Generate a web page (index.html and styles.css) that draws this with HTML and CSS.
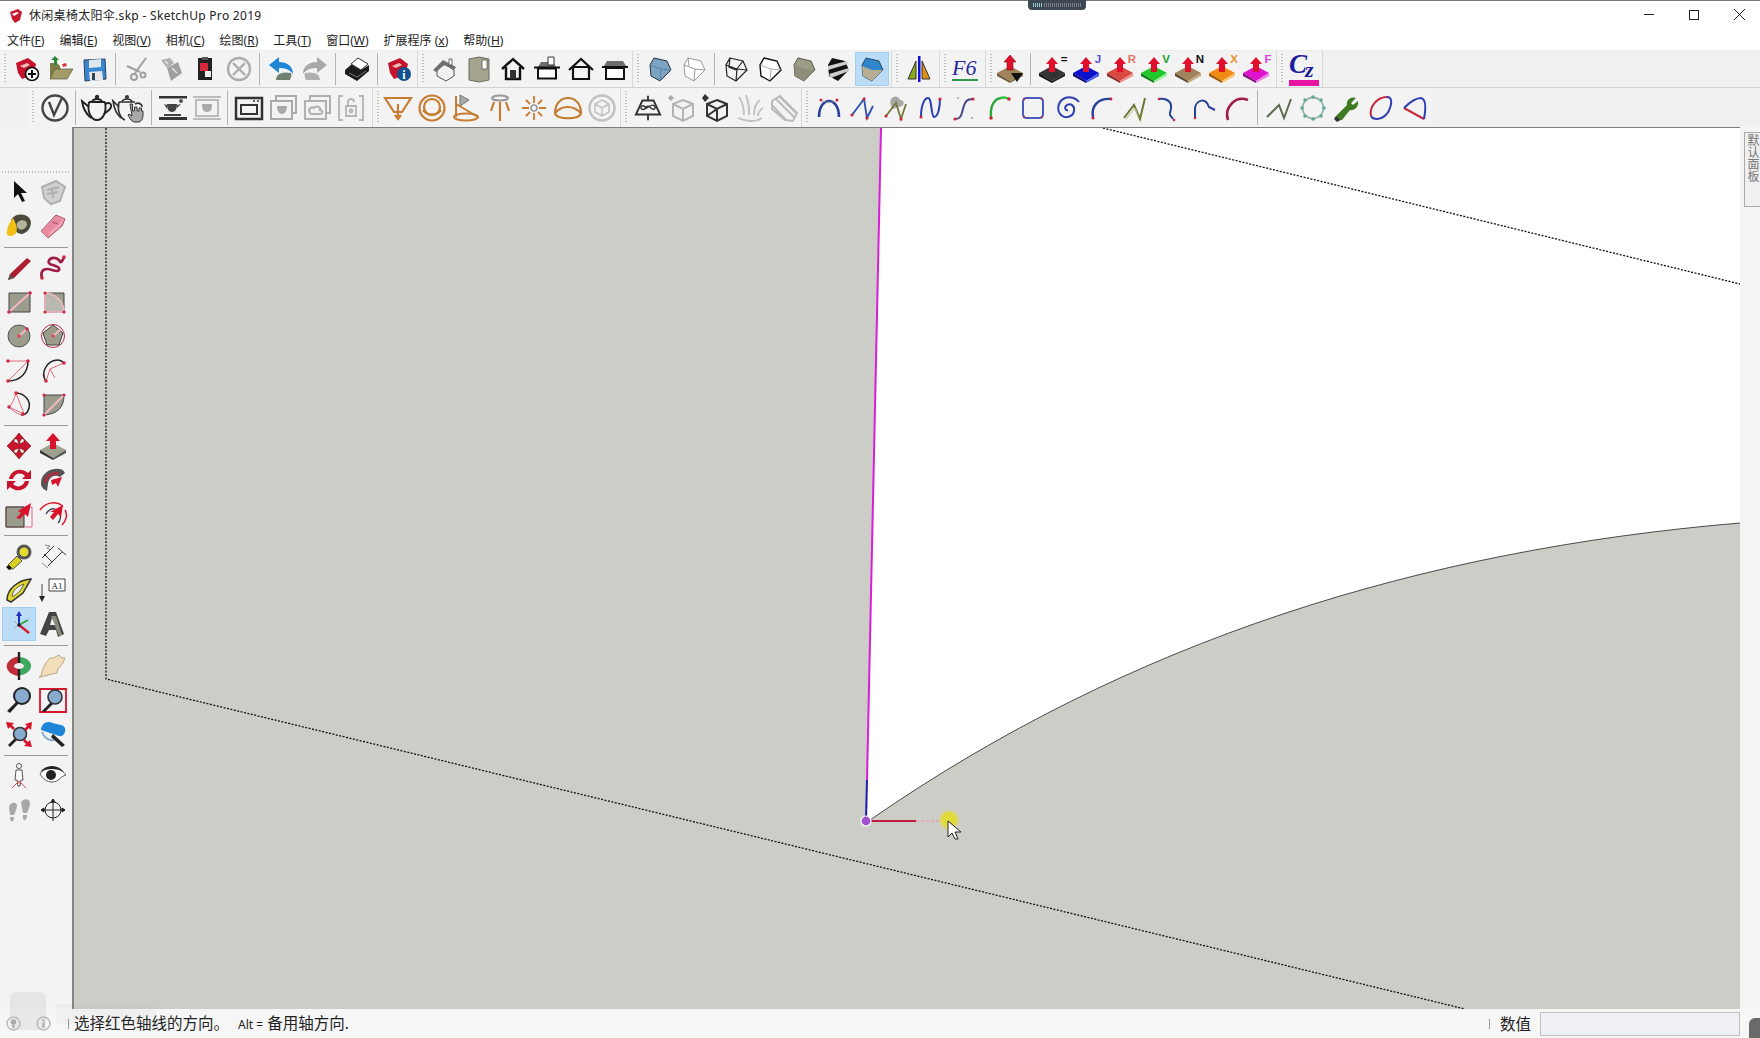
FILE: index.html
```html
<!DOCTYPE html>
<html lang="zh-CN">
<head>
<meta charset="utf-8">
<title>SketchUp</title>
<link rel="stylesheet" href="styles.css">
</head>
<body>
<div class="app">
<div class="widget"><span class="widget-on"></span><span class="widget-off"></span></div>
<header class="titlebar">
  <svg class="appicon" viewBox="0 0 14 14"><path d="M1 3l8-3 4 3-2 8-5 3-3-4z" fill="#c8162e"/><path d="M3 5l5-2 2 1-5 3z" fill="#fff"/></svg>
  <span class="title">休闲桌椅太阳伞.skp - SketchUp Pro 2019</span>
  <div class="winctl">
    <span class="win-min"></span><span class="win-max"></span>
    <svg class="win-close" viewBox="0 0 11 11"><path d="M0 0l11 11M11 0L0 11" stroke="#222" fill="none"/></svg>
  </div>
</header>
<nav class="menu">
  <span>文件(<u>F</u>)</span><span>编辑(<u>E</u>)</span><span>视图(<u>V</u>)</span><span>相机(<u>C</u>)</span><span>绘图(<u>R</u>)</span><span>工具(<u>T</u>)</span><span>窗口(<u>W</u>)</span><span>扩展程序 (<u>x</u>)</span><span>帮助(<u>H</u>)</span>
</nav>

<div class="row row1">
  <div class="tb pr1">
    <i class="grip"></i>
    <div class="b"><svg viewBox="0 0 28 28"><path d="M3 8l12-5 8 6-3 11-11 4-4-6z" fill="#c4142d"/><path d="M7 11l7-3 3 2-6 3z" fill="#eebbbb"/><circle cx="19" cy="19" r="6.500" fill="#fff" stroke="#111" stroke-width="1.600"/><path d="M19 15v8M15 19h8" stroke="#111" stroke-width="2"/></svg></div>
    <div class="b"><svg viewBox="0 0 28 28"><path d="M3 8h7l2 2h8v5L6 24H3z" fill="#7d7d48"/><path d="M12 8l9-2 2 7-9 2z" fill="#fff"/><path d="M15 9l4-1 1 3-4 1z" fill="#d33"/><path d="M8 14h18l-6 10H3z" fill="#a39c68" stroke="#5a5a3a" stroke-width=".7"/><path d="M8 1l4 4h-2v5H7V5H4z" fill="#2c8a3a"/></svg></div>
    <div class="b"><svg viewBox="0 0 28 28"><path d="M3 5l21-1 1 20-21 2z" fill="#3a86d0" stroke="#23405f"/><path d="M8 5l12-1v8L8 13z" fill="#dfe6ee"/><path d="M8 17l13-1 1 9-13 1z" fill="#e8e8e8"/><path d="M11 18h3v7h-3z" fill="#345"/></svg></div>
    <i class="sep"></i>
    <div class="b"><svg viewBox="0 0 28 28" fill="none" stroke="#a0a0a0" stroke-width="2"><path d="M23 3L12 18M4 11l13 6"/><circle cx="11" cy="22" r="3"/><circle cx="20" cy="20" r="2.500"/></svg></div>
    <div class="b"><svg viewBox="0 0 28 28"><path d="M4 5l9-2 4 5-7 5z" fill="#b0b0b0"/><path d="M10 13l11-6 4 11-11 8z" fill="#a0a0a0"/><path d="M8 6l3 3M15 13l5 5" stroke="#e4e4e4" stroke-width="1.500"/></svg></div>
    <div class="b"><svg viewBox="0 0 28 28"><path d="M7 3h14v22H7z" fill="#222"/><path d="M11 2h6v3h-6z" fill="#555"/><path d="M9 8h8v8H9z" fill="#d8283c"/><path d="M14 16h6v6h-6z" fill="#eee"/></svg></div>
    <div class="b"><svg viewBox="0 0 28 28" fill="none" stroke="#adadad" stroke-width="2.400"><circle cx="14" cy="14" r="11"/><path d="M8 8l12 12M20 8L8 20"/></svg></div>
    <i class="sep"></i>
    <div class="b"><svg viewBox="0 0 28 28"><path d="M9 25c0-6 6-9 15-7 1 2 0 5-1 7z" fill="#6f8070"/><path d="M2 10l10-8v5c8 0 14 4 14 12-3-4-7-6-14-6v5z" fill="#1f86d6"/></svg></div>
    <div class="b"><svg viewBox="0 0 28 28"><path d="M19 25c0-6-6-9-15-7-1 2 0 5 1 7z" fill="#b0b0b0"/><path d="M26 10L16 2v5C8 7 2 11 2 19c3-4 7-6 14-6v5z" fill="#a8a8a8"/></svg></div>
    <i class="sep"></i>
    <div class="b"><svg viewBox="0 0 28 28"><path d="M2 15l7-6 9 6 8-5v6L14 26 2 19z" fill="#1c1c1c"/><path d="M8 9l7-6 10 6-7 6z" fill="#fff" stroke="#333"/><path d="M6 18l8 4 9-6" stroke="#777" fill="none"/></svg></div>
    <i class="sep"></i>
    <div class="b"><svg viewBox="0 0 28 28"><path d="M3 8l12-5 8 6-3 11-11 4-4-6z" fill="#c4142d"/><path d="M7 11l7-3 3 2-6 3z" fill="#eebbbb"/><circle cx="19" cy="19" r="7" fill="#12508e"/><text class="t-i" x="19" y="24">i</text></svg></div>
  </div>
  <div class="tb pr0">
    <i class="grip"></i>
    <div class="b"><svg viewBox="0 0 28 28"><path d="M6 15l8-6 9 6v6l-8 5-9-5z" fill="#f0f0f0" stroke="#555"/><path d="M2 15L12 5l13 7-2 3-10-5-8 7z" fill="#6f6f6f"/><path d="M18 4h3v6h-3z" fill="#fff" stroke="#444" stroke-width=".8"/></svg></div>
    <div class="b"><svg viewBox="0 0 28 28"><path d="M4 4l10-2 10 2v21l-10 2-10-2z" fill="#a3a38e" stroke="#6c6c60"/><path d="M17 5h5v9h-5z" fill="#fff" stroke="#555" stroke-width=".8"/></svg></div>
    <div class="b"><svg viewBox="0 0 28 28" fill="none" stroke="#111" stroke-width="2.400"><path d="M3 14L14 4l11 10M7 12v12h14V12"/><path d="M11 15h6v9h-6z" fill="#333" stroke="none"/></svg></div>
    <div class="b"><svg viewBox="0 0 28 28"><path d="M5 12l3-5h12l3 5z" fill="#6f6f6f"/><path d="M15 2h6v8h-6z" fill="#fff" stroke="#333"/><path d="M1 12.500h26" stroke="#111" stroke-width="2"/><path d="M5 13.500h18v10H5z" fill="#fff" stroke="#111" stroke-width="2"/></svg></div>
    <div class="b"><svg viewBox="0 0 28 28" fill="none" stroke="#111" stroke-width="2.200"><path d="M2 15L14 4l12 11M6 12v12h16V12z"/></svg></div>
    <div class="b"><svg viewBox="0 0 28 28"><path d="M3 11l3-5h16l3 5z" fill="#6f6f6f"/><path d="M1 12h26" stroke="#111" stroke-width="2"/><path d="M5 13h18v11H5z" fill="#fff" stroke="#111" stroke-width="2"/></svg></div>
  </div>
  <div class="tb pr2">
    <i class="grip"></i>
    <div class="b"><svg viewBox="0 0 28 28"><path d="M8 3l13 3 4 9-11 11-9-5-1-11z" fill="#7aa4c2" stroke="#26303a"/><path d="M4 10l11 4 10 1M15 14l-1 12" stroke="#5d86a4" fill="none"/></svg></div>
    <div class="b"><svg viewBox="0 0 28 28" fill="#fff" stroke="#9a9a9a"><path d="M8 3l13 3 4 9-11 11-9-5-1-11z"/><path d="M4 10l11 4 10 1M15 14l-1 12M8 3l1 8" fill="none"/></svg></div>
    <i class="sep"></i>
    <div class="b"><svg viewBox="0 0 28 28" fill="none" stroke="#222" stroke-width="1.200"><path d="M8 3l13 3 4 9-11 11-9-5-1-11z"/><path d="M4 10l11 4 10 1M15 14l-1 12M8 3l-1 9 7 3M21 6l-7 9"/></svg></div>
    <div class="b"><svg viewBox="0 0 28 28" fill="#fff" stroke="#111" stroke-width="1.400"><path d="M8 3l13 3 4 9-11 11-9-5-1-11z"/><path d="M4 10l11 4 11 1M15 14l-1 12" stroke="#777" stroke-width=".6"/></svg></div>
    <div class="b"><svg viewBox="0 0 28 28"><path d="M8 3l13 3 4 9-11 11-9-5-1-11z" fill="#9c9c88" stroke="#55554c"/><path d="M4 10l11 4 10 1-11 11-9-5z" fill="#8e8e7b"/></svg></div>
    <div class="b"><svg viewBox="0 0 28 28"><path d="M8 3l13 3 4 9-11 11-9-5-1-11z" fill="#111"/><path d="M4 11l19-5 1 3-20 6zM5 19l20-6 0 3-18 7z" fill="#ccc"/></svg></div>
    <div class="b on"><svg viewBox="0 0 28 28"><path d="M8 3l13 3 4 9-11 11-9-5-1-11z" fill="#2f86c8" stroke="#2a4a6a"/><path d="M4 11l10 4 11 0-11 11-9-5z" fill="#b8ae94"/></svg></div>
  </div>
  <div class="tb">
    <i class="grip"></i>
    <div class="b"><svg viewBox="0 0 28 28"><path d="M3 24l8-18v18z" fill="#8aa820" stroke="#333"/><path d="M17 6l8 18h-8z" fill="#dc8f1c" stroke="#333"/><path d="M13 1h2.500v26H13z" fill="#1010dc"/></svg></div>
  </div>
  <div class="tb">
    <i class="grip g9"></i>
    <div class="b"><svg viewBox="0 0 28 28"><text class="t-f6" x="1" y="20">F6</text><path d="M1 24h26v2H1z" fill="#2d9a4c"/></svg></div>
  </div>
  <div class="tb">
    <i class="grip g8"></i>
    <div class="b"><svg viewBox="0 0 28 28"><path d="M1 18l13-7 13 7-13 8z" fill="#a0835a"/><path d="M1 18l13 8v2L1 21z" fill="#6e5a3c"/><path d="M27 18l-13 8v2l13-7z" fill="#8a7048"/><path d="M14 0l6 7h-3v8h-6V7H8z" fill="#e0102c" stroke="#600" stroke-width=".5"/><path d="M15 18h12l-6 9z" fill="#111"/></svg></div>
    <i class="sep"></i>
    <div class="b"><svg viewBox="0 0 28 28"><path d="M1 18l13-7 13 7-13 8z" fill="#333"/><path d="M1 18l13 8v2L1 21z" fill="#111"/><path d="M27 18l-13 8v2l13-7z" fill="#222"/><path d="M14 2l6 7h-3v8h-6V9H8z" fill="#e0102c"/><text class="t-l t-k" x="26" y="8">=</text></svg></div>
    <div class="b"><svg viewBox="0 0 28 28"><path d="M1 18l13-7 13 7-13 8z" fill="#0a10d0"/><path d="M1 18l13 8v2L1 21z" fill="#0a0a70"/><path d="M27 18l-13 8v2l13-7z" fill="#4a5ae0"/><path d="M14 2l6 7h-3v8h-6V9H8z" fill="#e0102c"/><text class="t-l t-j" x="26" y="8">J</text></svg></div>
    <div class="b"><svg viewBox="0 0 28 28"><path d="M1 18l13-7 13 7-13 8z" fill="#d84a40"/><path d="M1 18l13 8v2L1 21z" fill="#8a2a24"/><path d="M27 18l-13 8v2l13-7z" fill="#e89088"/><path d="M14 2l6 7h-3v8h-6V9H8z" fill="#e0102c"/><text class="t-l t-r" x="26" y="8">R</text></svg></div>
    <div class="b"><svg viewBox="0 0 28 28"><path d="M1 18l13-7 13 7-13 8z" fill="#20c82c"/><path d="M1 18l13 8v2L1 21z" fill="#107a18"/><path d="M27 18l-13 8v2l13-7z" fill="#a0f0a0"/><path d="M14 2l6 7h-3v8h-6V9H8z" fill="#e0102c"/><text class="t-l t-v" x="26" y="8">V</text></svg></div>
    <div class="b"><svg viewBox="0 0 28 28"><path d="M1 18l13-7 13 7-13 8z" fill="#a0835a"/><path d="M1 18l13 8v2L1 21z" fill="#5e4a30"/><path d="M27 18l-13 8v2l13-7z" fill="#c0a880"/><path d="M14 2l6 7h-3v8h-6V9H8z" fill="#e0102c"/><text class="t-l t-k" x="26" y="8">N</text></svg></div>
    <div class="b"><svg viewBox="0 0 28 28"><path d="M1 18l13-7 13 7-13 8z" fill="#f08c14"/><path d="M1 18l13 8v2L1 21z" fill="#985808"/><path d="M27 18l-13 8v2l13-7z" fill="#f8c070"/><path d="M14 2l6 7h-3v8h-6V9H8z" fill="#e0102c"/><text class="t-l t-x" x="26" y="8">X</text></svg></div>
    <div class="b"><svg viewBox="0 0 28 28"><path d="M1 18l13-7 13 7-13 8z" fill="#e014d0"/><path d="M1 18l13 8v2L1 21z" fill="#80107a"/><path d="M27 18l-13 8v2l13-7z" fill="#f080e8"/><path d="M14 2l6 7h-3v8h-6V9H8z" fill="#e0102c"/><text class="t-l t-f" x="26" y="8">F</text></svg></div>
  </div>
  <div class="tb tb-end">
    <i class="grip g11"></i>
    <div class="b"><svg viewBox="0 0 28 28"><text class="t-cz" x="-1" y="18">C</text><text class="t-cz2" x="15" y="22">z</text><path d="M-1 25h30v6H-1z" fill="#e814a4"/></svg></div>
  </div>
</div>

<div class="row row2">
  <div class="tb pr4">
    <i class="grip"></i>
    <div class="b"><svg viewBox="0 0 28 28" fill="none" stroke="#444" stroke-width="2.400"><circle cx="14" cy="14" r="12.500"/><path d="M8 8l5 13 8-17"/></svg></div>
    <i class="sep"></i>
    <div class="b"><svg class="wide" viewBox="0 0 32 28" fill="none" stroke="#222" stroke-width="1.900"><circle cx="16" cy="3" r="1.200"/><path d="M11 8c1-4 9-4 10 0M8 8h16"/><path d="M8 8c-2 10 2 18 8 18s10-8 8-18"/><path d="M8 13L1 7c1 7 4 13 9 17"/><path d="M24 10c6-3 8 2 4 6l-5 4"/></svg></div>
    <div class="b"><svg class="wide" viewBox="0 0 32 28"><g fill="none" stroke="#333" stroke-width="1.700"><circle cx="12" cy="3" r="1.200"/><path d="M7 8c1-4 9-4 10 0M4 8h16"/><path d="M4 8c-2 9 1 16 6 18"/><path d="M4 13L-2 7c1 7 3 13 8 17"/><path d="M20 10c4-2 7 0 7 3"/></g><path d="M15 10h2.500v7h2v-4h2.500v4h2v-3h2.500v3h1.500v4c0 4-2 7-5 7h-3c-3 0-5-3-7-7l1-1 3 2z" fill="#aaa" stroke="#333"/></svg></div>
    <i class="sep"></i>
    <div class="b"><svg viewBox="0 0 28 28"><path d="M0 2h28v2.500H0zM0 23h28v3H0z" fill="#333"/><circle cx="22" cy="7" r="2" fill="#555"/><path d="M8 10h10c0 4-1 8-5 8s-5-4-5-8zM5 20h17v2H5z" fill="#444"/><path d="M18 11l4-1-4 4zM8 11l-3-1 3 5z" fill="#444"/></svg></div>
    <div class="b"><svg viewBox="0 0 28 28"><path d="M0 2h28v2H0zM0 24h28v2H0z" fill="#bbb"/><path d="M3 6h22v16H3z" fill="none" stroke="#bbb" stroke-width="2"/><path d="M9 10h10c0 5-1 8-5 8s-5-3-5-8z" fill="#aaa"/></svg></div>
    <i class="sep"></i>
    <div class="b"><svg viewBox="0 0 28 28" fill="none" stroke="#333" stroke-width="2.500"><path d="M1 4h26v21H1z"/><path d="M6 11h16v9H6z" stroke-width="2"/><path d="M18 7h2M22 7h2" stroke-width="1.500"/></svg></div>
    <div class="b"><svg viewBox="0 0 28 28" fill="none" stroke="#aaa" stroke-width="2"><path d="M7 6V2h20v17h-4"/><path d="M2 7h21v18H2z"/><path d="M8 12h10c0 5-2 8-5 8s-5-3-5-8z" fill="#aaa" stroke="none"/></svg></div>
    <div class="b"><svg viewBox="0 0 28 28" fill="none" stroke="#b0b0b0" stroke-width="2"><path d="M7 6V2h20v17h-4"/><path d="M2 7h21v18H2z"/><path d="M7 19c-3-4 2-7 4-5 2-3 7-1 6 2 3 0 3 4 0 4H8z"/></svg></div>
    <div class="b"><svg viewBox="0 0 28 28" fill="none" stroke="#b4b4b4" stroke-width="1.800"><path d="M6 2H2v24h4M22 2h4v24h-4"/><path d="M9 12h10v10H9zM11 12V8c0-4 6-4 6 0"/><circle cx="14" cy="17" r="1.500"/></svg></div>
  </div>
  <div class="tb pr1">
    <i class="grip g9"></i>
    <div class="b"><svg viewBox="0 0 28 28" fill="none" stroke="#c77c32" stroke-width="2.200"><path d="M1 4h26l-9 14H10zM14 10v14"/><path d="M11 21l3 4 3-4" fill="#c77c32"/></svg></div>
    <div class="b"><svg viewBox="0 0 28 28" fill="none" stroke="#c77c32" stroke-width="2.200"><circle cx="14" cy="14" r="12.500"/><circle cx="14" cy="13" r="8"/><path d="M5 16c4 6 14 6 18 0"/></svg></div>
    <div class="b"><svg viewBox="0 0 28 28"><path d="M8 1v11l9-6z" fill="#aaa" stroke="#777"/><g fill="none" stroke="#c77c32" stroke-width="2"><path d="M4 2v21M4 10l22 13"/><ellipse cx="14" cy="23" rx="12" ry="3.500"/></g></svg></div>
    <div class="b"><svg viewBox="0 0 28 28"><ellipse cx="14" cy="4" rx="8" ry="2.500" fill="none" stroke="#999" stroke-width="2"/><path d="M14 8v19M8 8l-3 9M20 8l3 9" stroke="#c77c32" stroke-width="2.200" fill="none"/></svg></div>
    <div class="b"><svg viewBox="0 0 28 28"><circle cx="14" cy="14" r="3" fill="none" stroke="#999" stroke-width="1.600"/><path d="M14 2v7M14 19v7M2 14h7M19 14h7M6 6l4 4M18 18l4 4M22 6l-4 4M10 18l-4 4" stroke="#c77c32" stroke-width="1.800"/></svg></div>
    <div class="b"><svg viewBox="0 0 28 28" fill="none" stroke="#c77c32" stroke-width="2.200"><path d="M1 19C1 -1 27 -1 27 19c0 7-26 7-26 0z"/><path d="M1 19c7-8 18-8 26 0"/></svg></div>
    <div class="b"><svg viewBox="0 0 28 28" fill="none" stroke="#c0c0c0" stroke-width="2.400"><circle cx="14" cy="14" r="12.500"/><path d="M14 6l7 4v8l-7 4-7-4v-8zM7 10l7 4 7-4M14 14v8" stroke-width="1.500"/></svg></div>
  </div>
  <div class="tb pr0">
    <i class="grip"></i>
    <div class="b"><svg viewBox="0 0 30 28" fill="none" stroke="#333" stroke-width="2"><path d="M9 6h12l7 15H2zM15 1v5M15 21v6"/><path d="M12 13c-3-3-6 0-4 2s3 0 7-2 5-3 7-1-1 5-4 2-3-2-6-1z" stroke-width="1.500"/></svg></div>
    <div class="b"><svg viewBox="0 0 28 28"><path d="M3 1l3 3-3 3-3-3z" fill="#aaa"/><g fill="none" stroke="#b4b4b4" stroke-width="2"><path d="M15 6l10 4v12l-10 5-10-5V10zM5 10l10 5 10-5M15 15v12"/></g></svg></div>
    <div class="b"><svg viewBox="0 0 28 28"><path d="M3 0l4 4-4 4-3-4z" fill="#333"/><g fill="none" stroke="#333" stroke-width="2"><path d="M15 6l10 4v12l-10 5-10-5V10zM5 10l10 5 10-5M15 15v12M5 22l10-7"/></g></svg></div>
    <div class="b"><svg viewBox="0 0 28 28" fill="none" stroke="#c0c0c0" stroke-width="1.800"><path d="M2 24c8 4 18 4 24 0M8 21C8 12 5 6 3 3M13 21C14 10 11 5 10 1M18 21c0-8 2-12 6-15M22 22c0-4 2-6 5-8"/></svg></div>
    <div class="b"><svg viewBox="0 0 28 28" fill="none" stroke="#bbb" stroke-width="2"><path d="M2 7l8-5 17 17-4 8-8-1L2 15zM6 5l18 18M10 3l16 16M2 11l14 15"/></svg></div>
  </div>
  <div class="tb tb-tail">
    <i class="grip"></i>
    <div class="b"><svg viewBox="0 0 28 28"><path d="M4 23C4 11 10 7 14 7s10 4 10 16" fill="none" stroke="#27409a" stroke-width="2.600"/><path d="M6 6c3 3 13 3 16 0" fill="none" stroke="#aaa" stroke-dasharray="2 1"/><g fill="#c8283c"><circle cx="6" cy="6" r="1.500"/><circle cx="22" cy="6" r="1.500"/></g></svg></div>
    <div class="b"><svg viewBox="0 0 28 28"><path d="M3 21L15 5l3 19L24 12" fill="none" stroke="#2b4fb0" stroke-width="1.800"/><g fill="#c8283c"><circle cx="3" cy="21" r="1.600"/><circle cx="15" cy="5" r="1.600"/><circle cx="18" cy="24" r="1.600"/></g></svg></div>
    <div class="b"><svg viewBox="0 0 28 28"><path d="M8 5c3-4 8-3 9 1 4 0 5 4 2 6l-9 3c-3-3-3-7-2-10z" fill="#a8a8a8"/><path d="M3 22L13 9l5 16 5-15" fill="none" stroke="#76763c" stroke-width="1.800"/><g fill="#c8283c"><circle cx="3" cy="22" r="1.600"/><circle cx="18" cy="25" r="1.600"/></g></svg></div>
    <div class="b"><svg viewBox="0 0 28 28"><path d="M4 23C4 10 8 4 11 4c4 0 3 18 6 19 4 0 6-9 6-19" fill="none" stroke="#2b3fb4" stroke-width="2"/><g fill="#c8283c"><circle cx="4" cy="23" r="1.600"/><circle cx="23" cy="5" r="1.600"/></g></svg></div>
    <div class="b"><svg viewBox="0 0 28 28"><path d="M4 25c5 0 6-2 8-10s4-10 10-10" fill="none" stroke="#4a4a8a" stroke-width="2"/><path d="M6 4h2M20 24h2" stroke="#777"/><g fill="#c8283c"><circle cx="22" cy="5" r="1.600"/><circle cx="4" cy="25" r="1.600"/></g></svg></div>
    <div class="b"><svg viewBox="0 0 28 28"><path d="M6 23C5 12 9 5 16 4" fill="none" stroke="#28a838" stroke-width="2.400"/><path d="M16 4c3-1 6 0 8 1" fill="none" stroke="#28c838" stroke-width="2.400"/><g fill="#c8283c"><circle cx="6" cy="24" r="1.800"/><circle cx="24" cy="5" r="1.800"/></g></svg></div>
    <div class="b"><svg viewBox="0 0 28 28"><path d="M8 4h12c3 0 4 1 4 4v12c0 3-1 4-4 4H8c-3 0-4-1-4-4V8c0-3 1-4 4-4z" fill="none" stroke="#4858bc" stroke-width="2"/><g fill="#c8283c"><circle cx="5" cy="5" r="1"/><circle cx="23" cy="5" r="1"/><circle cx="5" cy="23" r="1"/><circle cx="23" cy="23" r="1"/></g></svg></div>
    <div class="b"><svg viewBox="0 0 28 28" fill="none" stroke="#3040b0" stroke-width="2"><path d="M15 16c-3 1-4-3-1-5 4-2 8 1 7 6-1 6-9 8-13 4C3 16 5 7 12 4c5-2 11 0 14 4"/></svg></div>
    <div class="b"><svg viewBox="0 0 28 28"><path d="M6 23C4 13 10 4 24 5" fill="none" stroke="#27409a" stroke-width="2.400"/><g fill="#c8283c"><circle cx="6" cy="24" r="1.600"/><circle cx="24" cy="5" r="1.400"/></g></svg></div>
    <div class="b"><svg viewBox="0 0 28 28"><path d="M3 24l10-13 6 14 5-21" fill="none" stroke="#6a7a34" stroke-width="2"/><path d="M5 25l9-11 4 11" fill="none" stroke="#b8b880"/></svg></div>
    <div class="b"><svg viewBox="0 0 28 28"><path d="M4 5c5-1 11 1 12 6s-2 7-1 10l3 4" fill="none" stroke="#27409a" stroke-width="2"/><g fill="#c8283c"><circle cx="4" cy="5" r="1.300"/><circle cx="19" cy="26" r="1.300"/></g></svg></div>
    <div class="b"><svg viewBox="0 0 28 28"><path d="M6 24V15C6 7 16 2 20 13l6 3" fill="none" stroke="#27409a" stroke-width="2"/><g fill="#c8283c"><circle cx="6" cy="24" r="1.300"/></g></svg></div>
    <div class="b"><svg viewBox="0 0 28 28"><path d="M5 26C1 14 12 1 25 6" fill="none" stroke="#a01c44" stroke-width="2.600"/></svg></div>
    <i class="sep"></i>
    <div class="b"><svg viewBox="0 0 28 28"><path d="M2 23L14 11l5 13L26 5" fill="none" stroke="#5c6c50" stroke-width="2"/></svg></div>
    <div class="b"><svg viewBox="0 0 28 28"><circle cx="14" cy="14" r="10.500" fill="none" stroke="#9ab8b0" stroke-width="1.800"/><g fill="#5fa898"><circle cx="14" cy="3" r="1.800"/><circle cx="14" cy="25" r="1.800"/><circle cx="3" cy="14" r="1.800"/><circle cx="25" cy="14" r="1.800"/><circle cx="6" cy="6" r="1.800"/><circle cx="22" cy="6" r="1.800"/><circle cx="6" cy="22" r="1.800"/><circle cx="22" cy="22" r="1.800"/></g></svg></div>
    <div class="b"><svg viewBox="0 0 28 28"><path d="M3 22l11-11c-1-5 4-9 9-7l-5 5 2 2 5-4c1 5-3 10-8 9L9 26l-5 1z" fill="#3e7a22"/><path d="M3 22l4 4-3 2-3-3z" fill="#333"/></svg></div>
    <div class="b"><svg viewBox="0 0 28 28" fill="none" stroke-width="2"><path d="M4 22C2 13 10 3 20 3" stroke="#c8283c"/><path d="M20 3c5 0 5 6 3 11-2 7-8 11-13 11-3 0-5-1-6-3" stroke="#2b3fb4"/></svg></div>
    <div class="b"><svg viewBox="0 0 28 28" fill="none" stroke-width="2"><path d="M3 14L23 25" stroke="#c8283c"/><path d="M3 14C9 8 15 4 20 4c5 1 5 10 3 21" stroke="#2b3fb4"/></svg></div>
  </div>
</div>

<main class="main">
  <aside class="tools">
    <i class="hgrip"></i>
    <div class="tgroup">
      <div class="b"><svg viewBox="0 0 28 28"><path d="M9 3v17l4-4 4 8 3-1-4-8h6z" fill="#111"/></svg></div>
      <div class="b"><svg viewBox="0 0 28 28" fill="none" stroke="#b0b0b0" stroke-width="2"><path d="M3 9l14-6 9 6-5 14-9 3-7-6z" fill="#d0d0d0"/><path d="M8 12l12-3M8 16l11-2M13 10l1 10"/></svg></div>
      <div class="b"><svg viewBox="0 0 28 28"><path d="M6 8c4-7 15-7 19-1 3 6-2 14-8 15-6 0-10-6-11-14z" fill="#4a4a3c"/><path d="M13 10c3-3 9-2 9 2s-5 7-8 5-3-5-1-7z" fill="#b4b49c"/><path d="M8 6c-4 5-7 12-6 17 3 2 7 1 9-2 2-4 0-10-3-15z" fill="#f2c014"/></svg></div>
      <div class="b"><svg viewBox="0 0 28 28"><path d="M2 19L17 3l9 4-3 7-14 12z" fill="#f5a0b4" stroke="#a05068"/><path d="M2 19l7 7 1-6 14-12-7-4z" fill="#e88aa0"/><path d="M13 10l6 2" stroke="#a05068"/></svg></div>
    </div>
    <i class="hsep"></i>
    <div class="tgroup">
      <div class="b"><svg viewBox="0 0 28 28"><path d="M3 26l2-6L22 4l4 3L9 24z" fill="#b01c30"/><path d="M3 26l2-6 4 4z" fill="#555"/></svg></div>
      <div class="b"><svg viewBox="0 0 28 28"><path d="M3 24c-2-6 1-9 5-9 5 0 10 4 12 1s-6-5-9-6-1-7 5-6 4 5 6 4 3-5 3-5" fill="none" stroke="#a01c44" stroke-width="2.600"/><circle cx="3" cy="24" r="1.800" fill="#d02840"/><circle cx="25" cy="3" r="1.800" fill="#d02840"/></svg></div>
      <div class="b"><svg viewBox="0 0 28 28"><path d="M4 5h21v19H4z" fill="#9c9c8c" stroke="#444"/><path d="M4 24L25 5" stroke="#f4b8c4" stroke-width="2"/><g fill="#d02840"><circle cx="4" cy="24" r="1.800"/><circle cx="25" cy="5" r="1.800"/></g></svg></div>
      <div class="b"><svg viewBox="0 0 28 28"><path d="M6 5h19v19H6z" fill="#9c9c8c" stroke="#444"/><path d="M6 5c10 0 19 8 19 19H6z" fill="#f0f0f0" fill-opacity=".35" stroke="#f4b8c4" stroke-width="1.500"/><g fill="#d02840"><circle cx="6" cy="5" r="1.600"/><circle cx="6" cy="24" r="1.600"/><circle cx="25" cy="24" r="1.600"/></g></svg></div>
      <div class="b"><svg viewBox="0 0 28 28"><circle cx="14" cy="14" r="11" fill="#9c9c8c" stroke="#555"/><path d="M14 14l8-7" stroke="#f4b8c4" stroke-width="2"/><circle cx="14" cy="14" r="1.700" fill="#e04050"/><circle cx="22" cy="7" r="1.700" fill="#d02840"/></svg></div>
      <div class="b"><svg viewBox="0 0 28 28"><circle cx="14" cy="14" r="11.500" fill="none" stroke="#c03048"/><path d="M14 3l10 8-4 12H8L4 11z" fill="#9c9c8c" stroke="#444"/><path d="M14 14l8-7" stroke="#f4b8c4" stroke-width="2"/><circle cx="14" cy="14" r="1.600" fill="#e04050"/></svg></div>
      <div class="b"><svg viewBox="0 0 28 28"><path d="M3 5h20M3 25L23 5" stroke="#e06a7c" fill="none"/><path d="M3 25c12 0 20-8 20-20" fill="none" stroke="#222" stroke-width="1.500"/><g fill="#d02840"><circle cx="3" cy="5" r="1.800"/><circle cx="23" cy="5" r="1.800"/><circle cx="3" cy="25" r="1.800"/></g></svg></div>
      <div class="b"><svg viewBox="0 0 28 28"><path d="M7 25C1 17 8 4 19 4c2 0 4 1 6 3" fill="none" stroke="#222" stroke-width="1.500"/><path d="M11 13l14-6M7 25l4-12 5 9" stroke="#e06a7c" fill="none"/><g fill="#d02840"><circle cx="25" cy="7" r="1.800"/><circle cx="7" cy="25" r="1.800"/></g></svg></div>
      <div class="b"><svg viewBox="0 0 28 28"><path d="M12 3c8 1 14 8 12 15-1 4-4 7-8 7" fill="none" stroke="#222" stroke-width="1.500"/><path d="M11 3c-2 6-3 10-7 14l15 7zM4 17c4 4 8 7 13 8" fill="none" stroke="#e06a7c"/><g fill="#d02840"><circle cx="11" cy="3" r="1.800"/><circle cx="4" cy="17" r="1.800"/><circle cx="18" cy="24" r="1.800"/></g></svg></div>
      <div class="b"><svg viewBox="0 0 28 28"><path d="M5 5h20c0 12-6 19-20 20z" fill="#9c9c8c" stroke="#444"/><path d="M5 25L25 5" stroke="#f4b8c4" stroke-width="2"/><g fill="#d02840"><circle cx="5" cy="5" r="1.600"/><circle cx="25" cy="5" r="1.600"/><circle cx="5" cy="25" r="1.600"/></g></svg></div>
    </div>
    <i class="hsep"></i>
    <div class="tgroup">
      <div class="b"><svg viewBox="0 0 28 28"><path d="M14 1l5 6h-3l-2 5 5-2V7l7 7-7 7v-3l-5-2 2 5h3l-5 6-5-6h3l2-5-5 2v3l-7-7 7-7v3l5 2-2-5H9z" fill="#c8142c" stroke="#600" stroke-width=".5"/></svg></div>
      <div class="b"><svg viewBox="0 0 28 28"><path d="M1 18l13-7 13 7-13 8z" fill="#a0a090"/><path d="M1 18l13 8v2L1 21z" fill="#333"/><path d="M27 18l-13 8v2l13-7z" fill="#555"/><path d="M14 1l7 8h-4v8h-6V9H7z" fill="#d8142c"/></svg></div>
      <div class="b"><svg viewBox="0 0 28 28" fill="#c8142c"><path d="M4 13C5 5 15 0 23 7l3-3v9h-9l3-3c-4-4-10-3-12 3zM24 15c-1 8-11 13-19 6l-3 3v-9h9l-3 3c4 4 10 3 12-3z"/></svg></div>
      <div class="b"><svg viewBox="0 0 28 28"><path d="M2 17C2 7 12 2 20 3c3 0 5 2 6 4l-5 4c-6-3-11 0-12 7l-1 7c-4-2-6-4-6-8z" fill="#555"/><path d="M6 17c1-7 7-10 14-10" fill="none" stroke="#b8283c" stroke-width="2.400"/><path d="M12 14l11-3-4 10-2-4-4 2z" fill="#d8142c"/></svg></div>
      <div class="b"><svg viewBox="0 0 28 28"><path d="M1 7h26v20H1z" fill="none" stroke="#e06a7c"/><path d="M1 7h18v20H1z" fill="#9c9c8c" stroke="#333"/><path d="M11 18l5-5-3-2 13-8-3 14-3-3-5 5z" fill="#d8142c"/></svg></div>
      <div class="b"><svg viewBox="0 0 28 28"><path d="M1 10C6 3 16 0 24 6M26 10c3 5 1 11-3 15" fill="none" stroke="#d8142c" stroke-width="1.500"/><path d="M7 14c2-4 6-6 9-5M21 14c1 3 0 7-2 9" fill="none" stroke="#3a4a5a" stroke-width="1.500"/><path d="M11 12l13-7-2 12-3-3-5 6-3-3 4-5z" fill="#d8142c"/></svg></div>
    </div>
    <i class="hsep"></i>
    <div class="tgroup">
      <div class="b"><svg viewBox="0 0 28 28"><path d="M3 23l9-9 5 5-9 8H4z" fill="#d8d020" stroke="#555"/><circle cx="19" cy="10" r="7.500" fill="#555"/><circle cx="19" cy="10" r="4.500" fill="#e4dc30"/><path d="M1 25l3 3 3-2-3-3z" fill="#111"/></svg></div>
      <div class="b"><svg viewBox="0 0 28 28" fill="none" stroke="#333"><path d="M3 16l12-12M9 24l14-14M5 12l8 8M19 6l8 7"/><path d="M6 3l5 1-3 2 3 2M3 21l6 5" stroke="#888"/></svg></div>
      <div class="b"><svg viewBox="0 0 28 28"><path d="M2 24C2 13 13 4 26 3l-8 14-12 9z" fill="#dcd430" stroke="#333" stroke-width="1.500"/><path d="M7 20C8 14 13 10 19 8l-4 7-6 5z" fill="#f0f0f0" stroke="#333" stroke-width=".7"/></svg></div>
      <div class="b"><svg viewBox="0 0 28 28"><path d="M10 3h16v12H10z" fill="#fff" stroke="#444"/><text class="t-a1" x="18" y="13">A1</text><path d="M3 8v15" stroke="#444"/><path d="M0 20l3 6 3-6z" fill="#222"/></svg></div>
      <div class="b on"><svg viewBox="0 0 28 28"><path d="M14 15V3" stroke="#2030c0" stroke-width="2"/><path d="M11 6l3-5 3 5z" fill="#2030c0"/><path d="M14 15l9-5" stroke="#28a838" stroke-width="2"/><path d="M14 15l10 8" stroke="#d01c30" stroke-width="2.400"/><path d="M14 15l-5-4M14 15l-5 3" stroke="#888" stroke-dasharray="1 1"/><circle cx="14" cy="15" r="1.800" fill="#222"/></svg></div>
      <div class="b"><svg viewBox="0 0 28 28"><path d="M10 2h7l8 22-6 3-2-7h-7l-3 6-6-2z" fill="#444"/><path d="M12 6h5l6 19-3 1z" fill="#8a8a80"/><path d="M11 15h5l-3-7z" fill="#f0f0f0"/></svg></div>
    </div>
    <i class="hsep"></i>
    <div class="tgroup">
      <div class="b"><svg viewBox="0 0 28 28"><path d="M2 12c3-6 10-8 12-7v19C8 24 0 19 2 12z" fill="#c02c38"/><path d="M14 5c6 0 13 4 12 10-1 5-8 9-12 8z" fill="#3ca860"/><path d="M14 0v28" stroke="#222" stroke-width="2.400"/><ellipse cx="14" cy="14" rx="5" ry="3" fill="#eee"/></svg></div>
      <div class="b"><svg viewBox="0 0 28 28"><path d="M2 25C3 17 7 10 11 6l3 0 6-3 3 3 3 0-2 5-5 6-1 4c-6 1-11 3-18 4z" fill="#f0dfb8" stroke="#b8a888"/></svg></div>
      <div class="b"><svg viewBox="0 0 28 28"><path d="M2 25l10-10 2 2L5 27z" fill="#222"/><circle cx="17" cy="10" r="8" fill="#88acd0" stroke="#222" stroke-width="2"/></svg></div>
      <div class="b"><svg viewBox="0 0 28 28"><path d="M1 3h26v23H1z" fill="none" stroke="#d8142c" stroke-width="1.800"/><path d="M3 25l9-9 2 2-8 8z" fill="#222"/><circle cx="16" cy="11" r="7" fill="#88acd0" stroke="#333" stroke-width="1.600"/></svg></div>
      <div class="b"><svg viewBox="0 0 28 28"><path d="M3 25l8-8 2 2-8 8z" fill="#222"/><circle cx="15" cy="14" r="6.500" fill="#88acd0" stroke="#333" stroke-width="1.600"/><path d="M1 2l8 1-2 2 3 3-2 2-3-3-2 2zM27 2l-1 8-2-2-3 3-2-2 3-3-2-2zM27 27l-8-1 2-2-3-3 2-2 3 3 2-2z" fill="#d8142c"/></svg></div>
      <div class="b"><svg viewBox="0 0 28 28"><path d="M2 10C2 4 8 0 14 3c5 2 10 1 12 5 1 5-2 9-6 8l-6-2z" fill="#1e86d8"/><path d="M3 12c2 6 7 9 12 8" fill="none" stroke="#88acd0" stroke-width="2"/><path d="M14 14l12 11-3 2-11-10z" fill="#222"/></svg></div>
    </div>
    <i class="hsep"></i>
    <div class="tgroup">
      <div class="b"><svg viewBox="0 0 28 28"><circle cx="14" cy="4" r="2.500" fill="#fff" stroke="#555"/><path d="M11 8h6l1 10h-2l-1 6h-2l-1-6h-2z" fill="#fff" stroke="#555"/><path d="M7 26l7-7 7 7M14 19v3" stroke="#d8505c" fill="none"/></svg></div>
      <div class="b"><svg viewBox="0 0 28 28"><path d="M1 12c6-9 18-9 26 1-7 2-7 7-14 7-5 0-9-3-12-8z" fill="#fff" stroke="#555"/><path d="M1 10c6-8 18-8 24 0-8-4-16-4-24 0z" fill="#222"/><circle cx="12" cy="13" r="5" fill="#222"/></svg></div>
      <div class="b"><svg viewBox="0 0 28 28" fill="#a8a8a8"><path d="M4 12c0-5 7-7 8-3 0 4-2 7-3 10H5zM5 21h4c0 6-4 6-4 0zM16 7c1-5 9-5 9 0 0 4-2 7-3 10h-4zM18 19h4c0 7-5 7-4 0z"/></svg></div>
      <div class="b"><svg viewBox="0 0 28 28" fill="none" stroke="#222"><circle cx="14" cy="14" r="8"/><path d="M2 14h24M14 3v22"/><path d="M2 14l3-2v4zM26 14l-3-2v4z" fill="#222"/><path d="M14 3l-2 3h4z" fill="#222"/></svg></div>
    </div>
  </aside>

  <section class="viewport">
    <svg class="scene" viewBox="74 128 1666 881">
      <path d="M881 128H1740V523C1420 550 1130 640 870 820L866 821z" fill="#fff"/>
      <path d="M494 168L129 651" stroke="#d4d4cf" fill="none" stroke-dasharray="3 3"/>
      <path d="M1103 128L1740 284M106 128V679L1465 1009" fill="none" stroke="#111" stroke-width="1.300" stroke-dasharray="2 1.500"/>
      <path d="M870 820C1130 640 1420 550 1740 523" fill="none" stroke="#222" stroke-width=".8"/>
      <path d="M881 128L867 780" stroke="#d81ed8" stroke-width="2" fill="none"/>
      <path d="M867 780L866 820" stroke="#1c1cb0" stroke-width="2" fill="none"/>
      <path d="M871 821H916" stroke="#c01c40" stroke-width="2" fill="none"/>
      <path d="M916 821H942" stroke="#e6a8c0" stroke-width="2" stroke-dasharray="3 2" fill="none"/>
      <circle class="halo" cx="949" cy="820" r="9"/>
      <circle cx="866" cy="821" r="5" fill="#a050d0" stroke="#fff" stroke-width="1.200"/>
      <path d="M948 821V837L952 833L955 839H958L955 832H961z" fill="#fff" stroke="#222"/>
    </svg>
  </section>

  <div class="rightdock"><div class="docktab">默认面板</div></div>
</main>

<footer class="status">
  <div class="watermark"></div>
  <svg class="st-ic" viewBox="0 0 14 14"><circle cx="7" cy="7" r="6" fill="none" stroke="#bbb" stroke-width="1.500"/><circle cx="7" cy="5.500" r="2.500" fill="#aaa"/><path d="M6 8h2v3H6z" fill="#aaa"/></svg>
  <svg class="st-ic" viewBox="0 0 14 14"><circle cx="7" cy="7" r="6" fill="none" stroke="#bbb" stroke-width="1.500"/><path d="M6 3h2v2H6zM6 6h2v5H6z" fill="#aaa"/></svg>
  <i class="st-sep"></i>
  <span class="st-text">选择红色轴线的方向。<small class="st-alt">Alt =</small> 备用轴方向.</span>
  <i class="st-sep st-sep-r"></i>
  <span class="st-label">数值</span>
  <div class="st-input"></div>
  <div class="st-corner"></div>
</footer>
</div>
</body>
</html>
```
FILE: styles.css
```css
* { box-sizing: border-box; }
html, body { margin: 0; padding: 0; height: 100%; overflow: hidden; }
body { background: #f0f0f0; color: #111; font-family: "Noto Sans", "Noto Sans CJK SC", sans-serif; }
i { display: block; font-style: normal; }
.app { position: relative; width: 1760px; height: 1038px; display: flex; flex-direction: column; }

.widget { position: absolute; top: 0; left: 1028px; width: 58px; height: 10px; background: #3e4652; border-radius: 0 0 4px 4px; display: flex; padding: 3px 5px; gap: 1px; }
.widget-on { width: 10px; background: repeating-linear-gradient(90deg, #8fd0d0 0 1px, #3e4652 1px 2px); }
.widget-off { flex: 1; background: repeating-linear-gradient(90deg, #79808a 0 1px, #3e4652 1px 2px); }

.titlebar { height: 28px; background: #fff; border-top: 1px solid #777; display: flex; align-items: center; padding: 2px 0 0 9px; flex: none; }
.appicon { width: 14px; height: 14px; margin-top: 1px; }
.title { margin-left: 6px; font-size: 12px; color: #222; line-height: 16px; letter-spacing: .3px; }
.winctl { margin-left: auto; display: flex; align-items: center; padding-right: 15px; margin-top: -2px; }
.win-min { width: 10px; height: 1px; background: #222; margin-right: 35px; }
.win-max { width: 10px; height: 10px; border: 1px solid #222; margin-right: 35px; }
.win-close { width: 11px; height: 11px; }

.menu { height: 22px; background: #fff; display: flex; align-items: center; gap: 15px; padding: 2px 0 0 7px; font-size: 12px; color: #222; flex: none; }

.row { display: flex; flex: none; background: #f0f0f0; }
.row1 { height: 38px; border-top: 1px solid #ececec; border-bottom: 1px solid #d2d2d2; }
.row2 { height: 39px; padding-left: 28px; }
.tb { display: flex; align-items: center; padding-right: 3px; border-right: 1px solid #d8d8d8; background: #f3f3f3; }
.pr0 { padding-right: 0; }
.pr1 { padding-right: 1px; }
.pr2 { padding-right: 2px; }
.pr4 { padding-right: 4px; }
.tb-tail { padding-right: 1px; border-right: none; }
.tb-end { padding-right: 1px; }
.grip { width: 10px; align-self: stretch; flex: none; position: relative; }
.grip::before { content: ""; position: absolute; left: 4px; top: 3px; bottom: 3px; width: 2px; background: repeating-linear-gradient(180deg, #bdbdbd 0 1px, transparent 1px 3px); }
.g8 { width: 7px; }
.g9 { width: 8px; }
.g11 { width: 10px; }
.sep { width: 1px; align-self: stretch; margin: 2px 4px 2px 3px; background: #b4b4b4; flex: none; }
.b { width: 34px; height: 34px; flex: none; display: flex; align-items: center; justify-content: center; }
.b svg { width: 28px; height: 28px; overflow: visible; display: block; flex: none; }
.b svg.wide { width: 32px; }
.b.on { background: #bbdcf6; box-shadow: inset 0 0 0 1px #a4cdee; }

.main { flex: 1; display: flex; min-height: 0; }
.tools { width: 72px; flex: none; background: #f3f3f3; padding: 41px 2px 0; display: flex; flex-direction: column; }
.hgrip { height: 7px; background: repeating-linear-gradient(90deg, #bdbdbd 0 1px, transparent 1px 3px) center / 100% 2px no-repeat; flex: none; }
.tgroup { display: grid; grid-template-columns: 34px 34px; grid-auto-rows: 34px; }
.hsep { height: 8px; flex: none; margin: 0 2px; background: linear-gradient(#9a9a9a, #9a9a9a) center / 100% 1px no-repeat; }
.viewport { flex: 1; min-width: 0; background: #cdcdc8; border-left: 2px solid #858585; border-top: 1px solid #7c7c7c; }
.scene { display: block; width: 1666px; height: 881px; }
.halo { fill: #e4dc2c; opacity: .9; filter: blur(1px); }
.rightdock { width: 20px; flex: none; background: #f5f5f5; padding: 5px 0 0 4px; }
.docktab { height: 75px; writing-mode: vertical-rl; font-size: 12px; line-height: 15px; padding-top: 1px; color: #777; border: 1px solid #aaa; border-right: none; background: #f0f0f0; }

.status { height: 29px; flex: none; background: #f6f6f6; display: flex; align-items: center; position: relative; padding-left: 6px; }
.watermark { position: absolute; left: 10px; top: -17px; width: 36px; height: 38px; border-radius: 6px; background: rgba(150, 150, 150, .14); }
.watermark::after { content: ""; position: absolute; left: 46px; top: 12px; width: 100px; height: 20px; background: rgba(150, 150, 150, .06); }
.st-ic { width: 15px; height: 15px; margin-right: 15px; position: relative; }
.st-sep { width: 1px; height: 10px; background: #999; margin-left: 2px; }
.st-text { margin-left: 5px; font-size: 15.500px; color: #222; white-space: nowrap; line-height: 20px; }
.st-alt { font-size: 12px; margin-left: 9px; }
.st-sep-r { margin-left: auto; }
.st-label { font-size: 15.500px; margin-left: 10px; color: #222; }
.st-input { width: 200px; height: 24px; margin-left: 9px; margin-right: 20px; background: #eff0f3; border: 1px solid #bfc1c9; }
.st-corner { position: absolute; right: 0; bottom: 0; width: 11px; height: 20px; background: #6a6a6a; border-radius: 6px 0 0 0; }

.t-i { font: bold 12px "Liberation Serif", serif; fill: #fff; text-anchor: middle; }
.t-f6 { font: italic 22px "Liberation Serif", serif; fill: #2a2a9c; }
.t-cz { font: italic bold 27px "Liberation Serif", serif; fill: #1c1c9c; }
.t-cz2 { font: italic bold 22px "Liberation Serif", serif; fill: #1c1c9c; }
.t-l { font: bold 11.500px "Liberation Sans", sans-serif; text-anchor: middle; }
.t-k { fill: #111; }
.t-j { fill: #5050d8; }
.t-r { fill: #e07868; }
.t-v { fill: #20a030; }
.t-x { fill: #f09030; }
.t-f { fill: #e040e0; }
.t-a1 { font: 9px "Liberation Serif", serif; fill: #222; text-anchor: middle; }
```
